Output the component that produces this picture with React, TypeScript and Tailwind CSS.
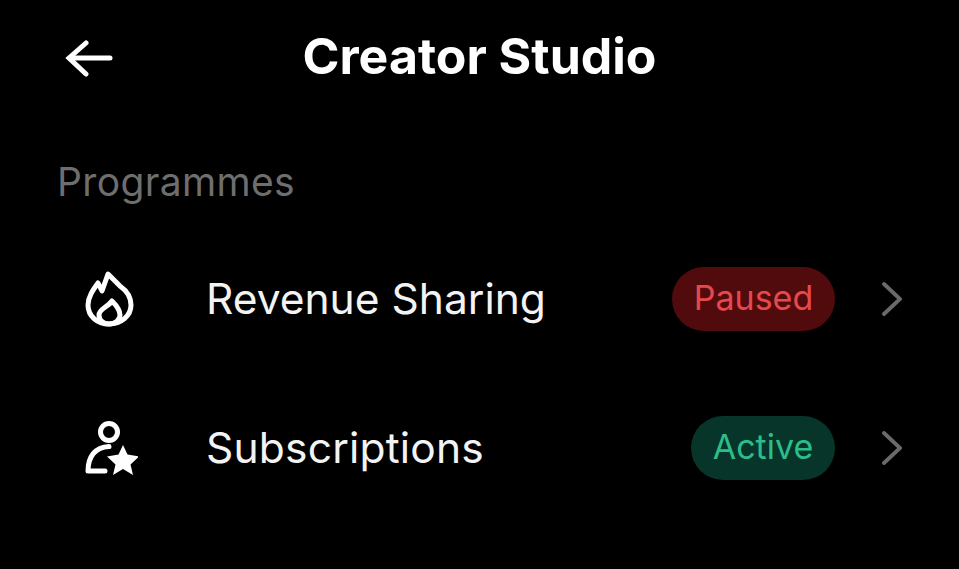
export default function App() {
  return (
    <div className="w-[959px] h-[569px] bg-black overflow-hidden flex flex-col font-['Inter',sans-serif] text-white">
      <header className="relative h-[112px] shrink-0 flex items-center justify-center">
        <svg className="absolute left-[65px] top-[39px]" width="48" height="38" viewBox="0 0 48 38" fill="none" stroke="white" strokeWidth="5" strokeLinecap="round" strokeLinejoin="miter">
          <path d="M45 19H5" />
          <path d="M21 4L4 19L21 35" />
        </svg>
        <h1 className="text-[50px] font-bold leading-none">Creator Studio</h1>
      </header>
      <div className="pl-[57px] pt-[50px] flex items-center">
        <span className="text-[39px] leading-none text-[#6e6e6e] tracking-[0.35px]">Programmes</span>
      </div>
      <div className="mt-[66px] flex flex-col gap-[85px] pl-[84px] pr-[57px]">
        <div className="flex items-center h-[64px]">
          <div className="w-[122px] shrink-0 flex">
            <svg width="52" height="58" viewBox="0 0 52 58" fill="none" stroke="white" strokeWidth="5" strokeLinejoin="round">
              <path d="M24 4L36 16C43 21 47 28 47 35C47 46 37 54 25 54C13 54 4 46 4 35C4 27 9 20 14 13L18 21L24 4Z" />
              <path d="M28 31C33 36 36 40 36 45C36 50 31 54 25 54C19 54 15 50 15 45C15 39 24 37 28 31Z" />
            </svg>
          </div>
          <span className="text-[42.5px] leading-none text-[#f3f3f3]">Revenue Sharing</span>
          <div className="ml-auto flex items-center">
            <span className="h-[64px] w-[163px] pb-[3px] rounded-full bg-[#520b0d] text-[#e5484d] text-[34px] flex items-center justify-center">Paused</span>
            <svg className="ml-[47px]" width="20" height="34" viewBox="0 0 20 34" fill="none" stroke="#6a6a6a" strokeWidth="3.8" strokeLinecap="round">
              <path d="M2 2L18 17L2 32" />
            </svg>
          </div>
        </div>
        <div className="flex items-center h-[64px]">
          <div className="w-[122px] shrink-0 flex">
            <svg width="54" height="54" viewBox="0 0 54 54" fill="none">
              <circle cx="25" cy="11" r="8.5" stroke="white" strokeWidth="5" />
              <path d="M4 50C4 36 11 26 25 25.5M4 50H21" stroke="white" strokeWidth="5" strokeLinecap="round" />
              <path fill="white" d="M39 24L43.5 33.5L55 35.5L46.5 43.5L49 54L39 48L29 54L31.5 43.5L23 35.5L34.5 33.5Z" />
            </svg>
          </div>
          <span className="text-[42.5px] tracking-[0.2px] leading-none text-[#f3f3f3]">Subscriptions</span>
          <div className="ml-auto flex items-center">
            <span className="h-[64px] w-[144px] pb-[3px] rounded-full bg-[#07352a] text-[#2dbd8a] text-[34px] flex items-center justify-center">Active</span>
            <svg className="ml-[47px]" width="20" height="34" viewBox="0 0 20 34" fill="none" stroke="#6a6a6a" strokeWidth="3.8" strokeLinecap="round">
              <path d="M2 2L18 17L2 32" />
            </svg>
          </div>
        </div>
      </div>
    </div>
  );
}
